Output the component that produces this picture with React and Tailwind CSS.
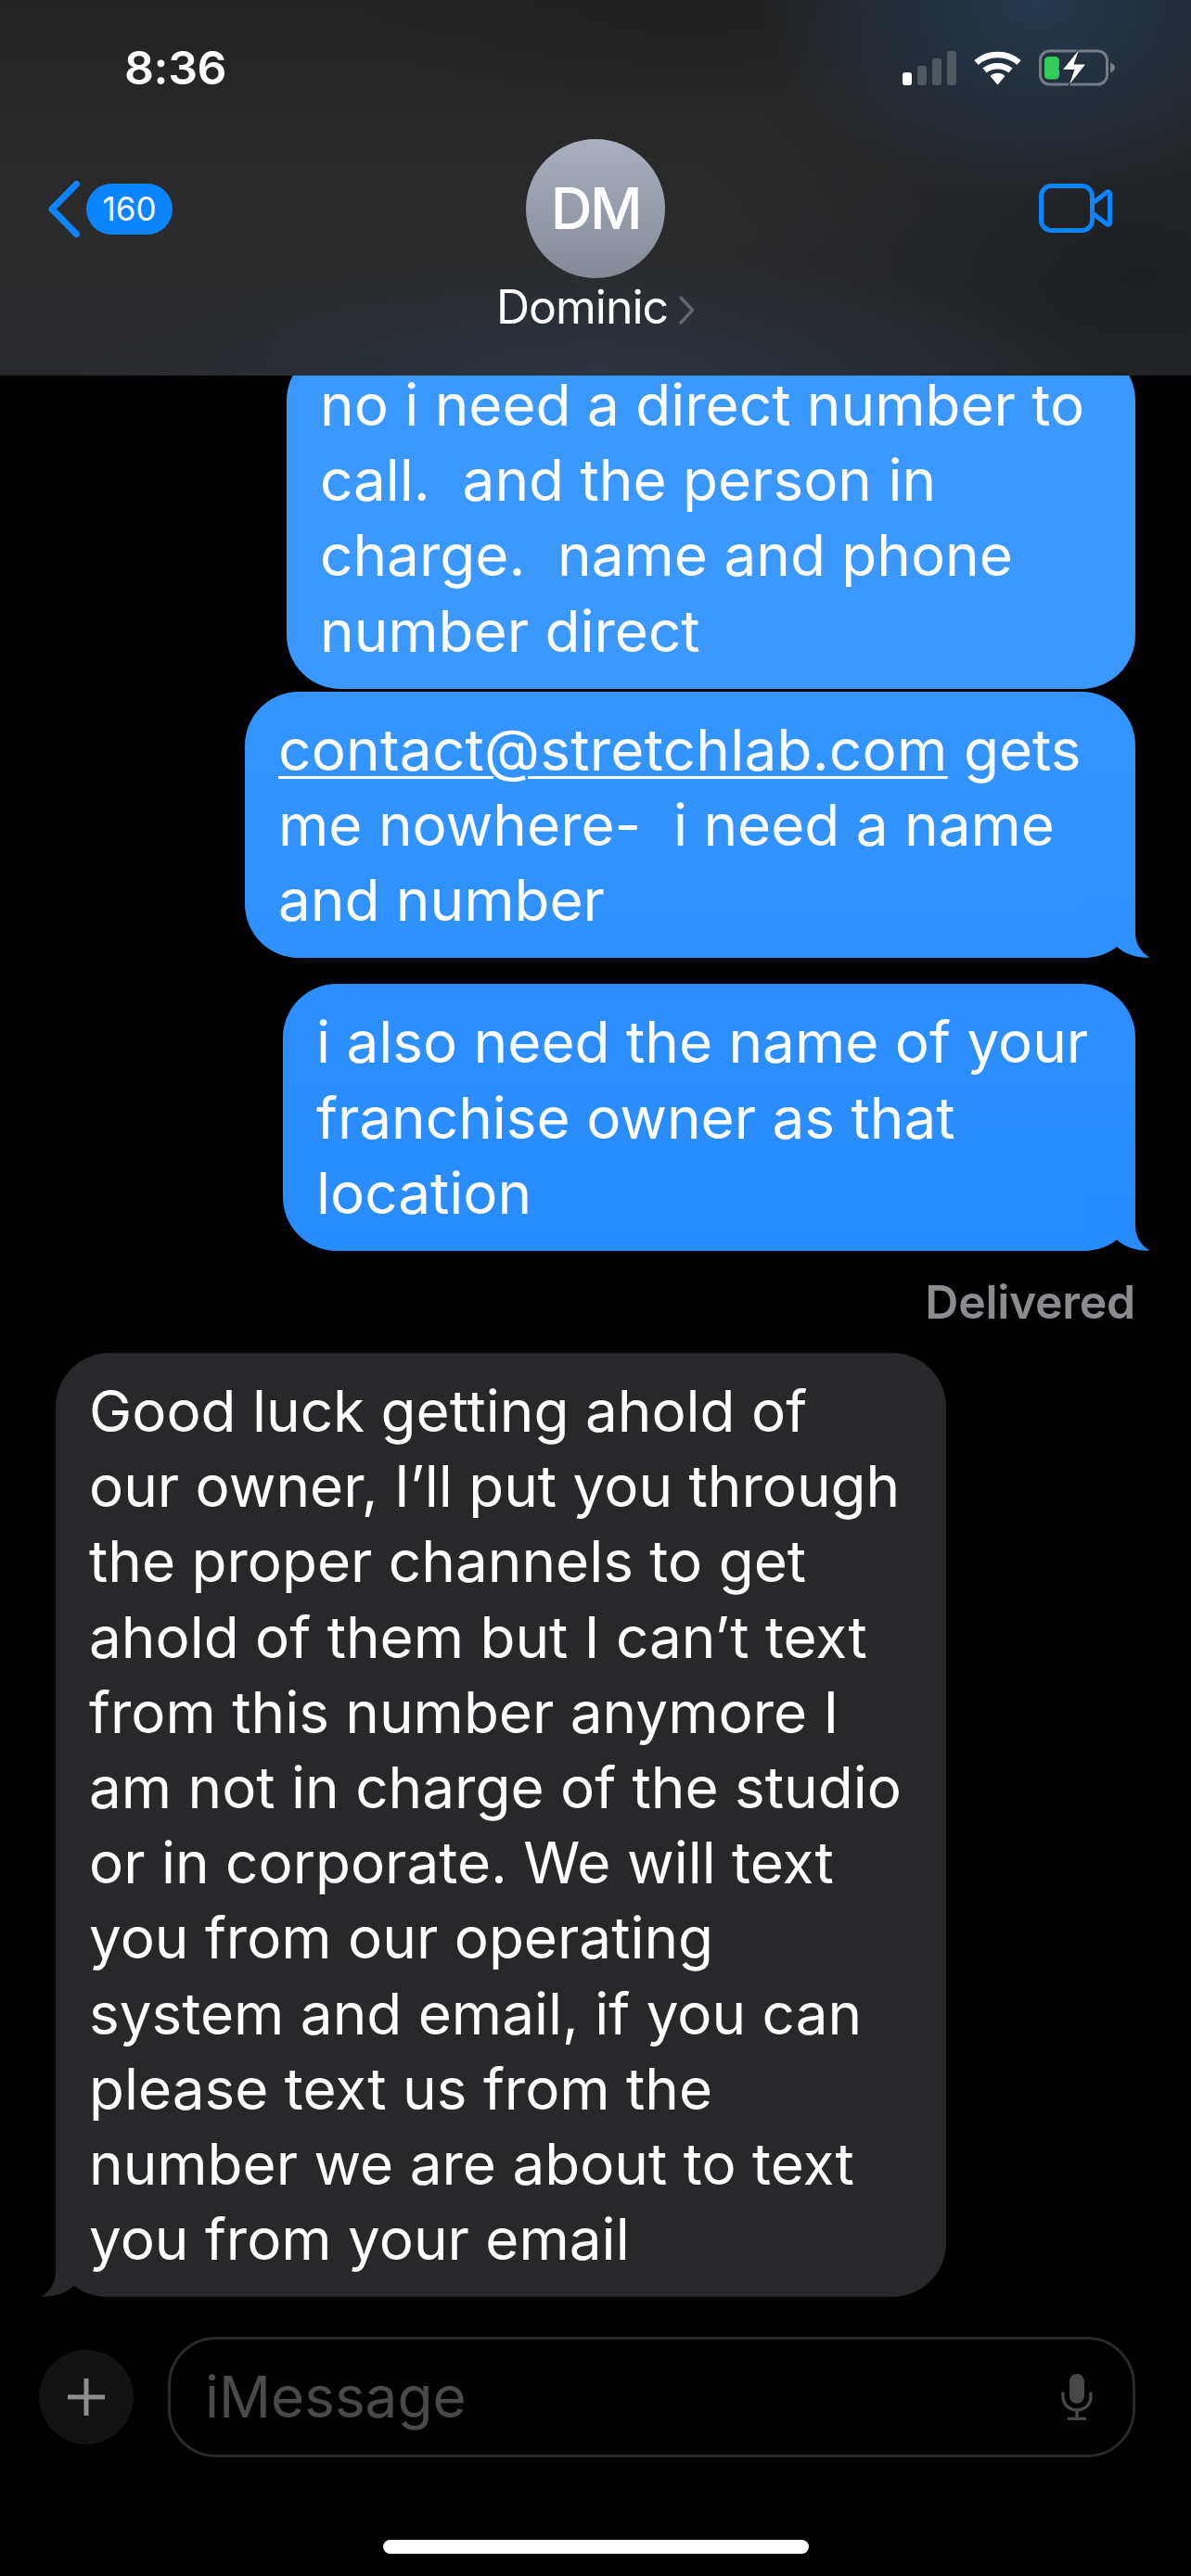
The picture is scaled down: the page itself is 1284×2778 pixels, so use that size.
import React from "react";

const Tail = ({ fill, left }) => (
  <svg
    viewBox="0 0 74 59"
    className={`absolute bottom-0 w-[74px] h-[59px] ${left ? "left-[-16px] -scale-x-100" : "right-[-16px]"}`}
    aria-hidden="true"
  >
    <path d="M58 0 L58 32 C58 45 66 55 74 58.5 C62 59.5 48 56 38 47 C28 55 16 59 0 59 L0 0 Z" fill={fill} />
  </svg>
);

const Bubble = ({ lines, className, tail, tailLeft, tailFill }) => (
  <div className={`relative rounded-[58px] pl-[36px] pr-[20px] pt-[22px] pb-[22px] text-[62px] leading-[81.2px] text-white whitespace-pre ${className}`}>
    {tail && <Tail fill={tailFill} left={tailLeft} />}
    <div className="relative">
      {lines.map((l, i) => (
        <div key={i}>{l}</div>
      ))}
    </div>
  </div>
);

export default function App() {
  return (
    <div className="w-[1284px] h-[2778px] bg-black overflow-hidden flex flex-col font-['Inter',sans-serif]">
      <header className="relative z-10 h-[405px] shrink-0 pt-[53px] bg-[radial-gradient(ellipse_300px_220px_at_1120px_0px,#24384f_0%,rgba(36,56,79,0)_100%),radial-gradient(ellipse_560px_130px_at_640px_405px,#2c3440_0%,rgba(44,52,64,0)_100%),radial-gradient(ellipse_520px_300px_at_1230px_300px,#1d1f22_0%,rgba(29,31,34,0)_100%),radial-gradient(ellipse_380px_120px_at_740px_0px,#202020_0%,rgba(32,32,32,0)_100%),linear-gradient(180deg,#232323_0%,#2b2b2c_60%,#28292b_100%)]">
        <div className="flex items-center justify-between h-[40px] pl-[134px] pr-[82px]">
          <span className="text-[50px] leading-[40px] font-semibold tracking-[-0.4px] text-white">8:36</span>
          <div className="flex items-center">
            <div className="flex items-end gap-[6px] h-[37px]">
              <div className="w-[10px] h-[14px] rounded-[3px] bg-white" />
              <div className="w-[10px] h-[21px] rounded-[3px] bg-[#4f575f]" />
              <div className="w-[10px] h-[29px] rounded-[3px] bg-[#4f575f]" />
              <div className="w-[10px] h-[37px] rounded-[3px] bg-[#4f575f]" />
            </div>
            <svg viewBox="0 0 51 37" className="w-[51px] h-[37px] ml-[19px]" aria-hidden="true">
              <path d="M2.500 12.500 C15 1 36 1 48.500 12.500" fill="none" stroke="#fff" strokeWidth="6.500" strokeLinecap="butt" />
              <path d="M11.500 21 C19 14.500 32 14.500 39.500 21" fill="none" stroke="#fff" strokeWidth="6.500" />
              <path d="M17.500 27 C22.500 22.600 28.500 22.600 33.500 27 L25.500 36.500 Z" fill="#fff" />
            </svg>
            <svg viewBox="0 0 82 42" className="w-[82px] h-[42px] ml-[19px]" aria-hidden="true">
              <rect x="1.500" y="3" width="72" height="36" rx="10" fill="none" stroke="#767c84" strokeWidth="3" />
              <path d="M77 15.500 C80 16.500 82 18.500 82 21 C82 23.500 80 25.500 77 26.500 Z" fill="#767c84" />
              <path d="M11 9 H17 C20 9 22 11 22 14 V20 C22 21 21 22 21 22 C21.500 23 22 24 22 25 V29 C22 32 20 33.500 17 33.500 H11 C8 33.500 6 32 6 29 V14 C6 11 8 9 11 9 Z" fill="#34cc5a" />
              <path d="M44 -1 L24 24 H37 L31 43 L52 16 H39 Z" fill="#232b33" />
              <path d="M43 2 L26 23 H38.500 L33 39 L50 17.500 H37.500 Z" fill="#fff" />
            </svg>
          </div>
        </div>
        <div className="mt-[57px] grid grid-cols-[1fr_214px_1fr] px-[51px]">
          <div className="flex items-start h-[150px] pt-[44px] gap-[6px]">
            <svg viewBox="0 0 36 63" className="w-[36px] h-[63px]" aria-hidden="true">
              <path d="M31.500 4.500 L5 31.500 L31.500 58.500" fill="none" stroke="#0a84ff" strokeWidth="7" strokeLinecap="round" strokeLinejoin="round" />
            </svg>
            <div className="mt-[4px] w-[93px] h-[55px] rounded-full bg-[#0a84ff] flex items-center justify-center text-[35px] leading-none text-white">160</div>
          </div>
          <div className="flex flex-col">
            <div className="w-[150px] h-[150px] mx-auto rounded-full bg-gradient-to-b from-[#a9b0be] to-[#868a97] flex items-center justify-center text-[62px] leading-none font-medium tracking-[-2.5px] text-white">DM</div>
            <div className="mt-[9px] flex items-center justify-between h-[44px]">
              <span className="text-[50px] leading-[44px] tracking-[-1px] text-white">Dominic</span>
              <svg viewBox="0 0 19 31" className="w-[19px] h-[31px] mt-[6px] ml-auto -mr-[1px]" aria-hidden="true">
                <path d="M3 2 L15.500 15.500 L3 29" fill="none" stroke="#63666c" strokeWidth="3.500" strokeLinecap="round" strokeLinejoin="round" />
              </svg>
            </div>
          </div>
          <div className="flex justify-end pr-[34px] pt-[48px]">
            <svg viewBox="0 0 79 53" className="w-[79px] h-[53px]" aria-hidden="true">
              <rect x="2.500" y="2.500" width="55" height="48" rx="11" fill="none" stroke="#0a84ff" strokeWidth="5" />
              <path d="M58 21 L73 9.500 C75 8 76.500 9 76.500 11 V42 C76.500 44 75 45 73 43.500 L58 32" fill="none" stroke="#0a84ff" strokeWidth="5" strokeLinejoin="round" />
            </svg>
          </div>
        </div>
      </header>

      <main className="flex-1 px-[60px] flex flex-col items-end -mt-[31px]">
        <Bubble
          className="w-[915px] bg-[#3a98fe]"
          lines={["no i need a direct number to", "call.  and the person in", "charge.  name and phone", "number direct"]}
        />
        <Bubble
          className="w-[960px] mt-[3px] bg-gradient-to-b from-[#3495ff] to-[#2f91ff]"
          tail
          tailFill="#2f91ff"
          lines={[
            <>
              <span className="underline decoration-[3px] underline-offset-[6px] tracking-[0.25px]">contact@stretchlab.com</span> gets
            </>,
            "me nowhere-  i need a name",
            "and number",
          ]}
        />
        <Bubble
          className="w-[919px] mt-[28px] bg-gradient-to-b from-[#2d8fff] to-[#288cff]"
          tail
          tailFill="#288cff"
          lines={["i also need the name of your", "franchise owner as that", "location"]}
        />
        <div className="mt-[27px] h-[56px] leading-[56px] text-[50px] font-semibold tracking-[-0.3px] text-[#8b8b90]">Delivered</div>
        <Bubble
          className="self-start w-[960px] mt-[27px] bg-[#28282a]"
          tail
          tailLeft
          tailFill="#28282a"
          lines={[
            "Good luck getting ahold of",
            "our owner, I’ll put you through",
            "the proper channels to get",
            "ahold of them but I can’t text",
            "from this number anymore I",
            "am not in charge of the studio",
            "or in corporate. We will text",
            "you from our operating",
            "system and email, if you can",
            "please text us from the",
            "number we are about to text",
            "you from your email",
          ]}
        />
      </main>

      <footer className="shrink-0 h-[258px] flex flex-col">
        <div className="flex items-center pl-[42px] pr-[60px]">
          <div className="w-[102px] h-[102px] rounded-full bg-[#121212] flex items-center justify-center">
            <svg viewBox="0 0 40 40" className="w-[40px] h-[40px]" aria-hidden="true">
              <path d="M20 1 V39 M1 20 H39" stroke="#8e8e8e" strokeWidth="5" strokeLinecap="round" />
            </svg>
          </div>
          <div className="ml-[37px] flex-1 h-[130px] rounded-[52px] border-[3px] border-[#2a2a2c] flex items-center justify-between pl-[37px] pr-[42px]">
            <span className="text-[62px] leading-none text-[#4a4a4c]">iMessage</span>
            <svg viewBox="0 0 36 50" className="w-[36px] h-[50px]" aria-hidden="true">
              <rect x="10" y="0" width="16" height="32" rx="8" fill="#48484a" />
              <path d="M3 21 V25 C3 33 10 39 18 39 C26 39 33 33 33 25 V21" fill="none" stroke="#48484a" strokeWidth="3.500" strokeLinecap="round" />
              <path d="M18 39 V47 M8 48.500 H28" stroke="#48484a" strokeWidth="3.500" />
            </svg>
          </div>
        </div>
        <div className="mt-[89px] mx-auto w-[459px] h-[15px] rounded-full bg-white" />
      </footer>
    </div>
  );
}
